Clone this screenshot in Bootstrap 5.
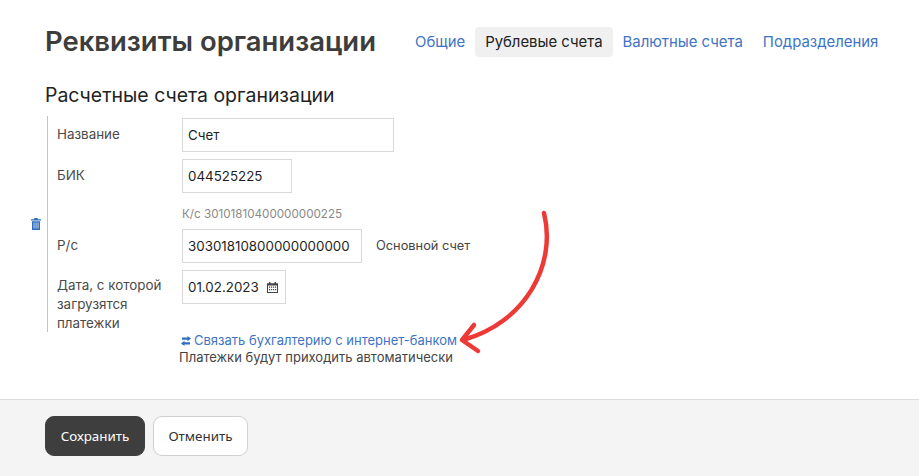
<!DOCTYPE html>
<html lang="ru"><head><meta charset="utf-8">
<title>Реквизиты организации</title>
<link href="https://cdn.jsdelivr.net/npm/bootstrap@5.3.0/dist/css/bootstrap.min.css" rel="stylesheet">
<style>
html,body{height:476px;overflow:hidden}
body{font-family:Inter,"Noto Sans",sans-serif;font-size:13px;color:#444;background:#fff;position:relative}
.page-main{height:399px;padding:21px 0 0 45px}
.page-head{height:40px}
.page-title{font-size:27.45px;font-weight:600;color:#3d3d3d;margin:0;line-height:40px;width:360px}
.tabs-row{margin-top:2px}
.tabs-row .nav-link{font-size:14.9px;line-height:20px;padding:5px 10px;color:#3f74c4;border-radius:4px}
.tabs-row .nav-link.active{background:#f0f0f0;color:#222}
.sect-title{font-size:19.45px;font-weight:400;color:#222;margin:22px 0 0;line-height:24px}
.acc-block{position:relative;width:500px;margin:9px 0 0 2px;border-left:1px solid #c4c4c4;height:216px;padding:2px 0 0 9px}
.f-row{display:flex;margin-bottom:7px}
.f-label{width:125px;flex:none;line-height:19px;padding-top:6.5px;color:#4a4a4a;font-size:13.4px}
.f-label-long{padding-top:5.5px}
.f-box{height:34px;border:1px solid #d9d9d9;padding:0 5px;font-size:13.35px;color:#1f1f1f;line-height:32px;white-space:nowrap;background:#fff}
.hint-row{font-size:11.65px;color:#8a8a8a;margin:14px 0 8px 125px;line-height:14px}
.trash{position:absolute;left:-17px;top:102px}
.main-acc{margin-left:14px;line-height:34px;font-size:12.8px}
.cal{margin-left:8px;vertical-align:-1px}
.bank-link{margin:-2px 0 0 136px;line-height:20px;color:#3f74c4;white-space:nowrap}
.bank-link svg{vertical-align:-1px;margin-right:2px}
.bank-note{margin-left:134px;line-height:15px;color:#444}
.curve{position:absolute;left:455px;top:205px}
.page-foot{height:77px;background:#f4f4f4;border-top:1px solid #dcdcdc;padding:16px 0 0 45px;font-family:"Noto Sans",sans-serif}
.btn-save,.btn-undo{height:40px;font-size:13.4px;line-height:20px;border-radius:9px;padding:9px 10px}
.btn-save{background:#3e3e3e;color:#fff;border:1px solid #3e3e3e;width:100px}
.btn-undo{background:#fff;color:#333;border:1px solid #d0d0d0;width:95px}
</style></head>
<body>
<div class="page-main">
  <div class="page-head d-flex align-items-center">
    <h1 class="page-title">Реквизиты организации</h1>
    <ul class="nav tabs-row">
      <li class="nav-item"><a class="nav-link" href="#">Общие</a></li>
      <li class="nav-item"><a class="nav-link active" href="#">Рублевые счета</a></li>
      <li class="nav-item"><a class="nav-link" href="#">Валютные счета</a></li>
      <li class="nav-item"><a class="nav-link" href="#">Подразделения</a></li>
    </ul>
  </div>
  <h2 class="sect-title">Расчетные счета организации</h2>
  <div class="acc-block">
    <svg class="trash" width="10" height="12" viewBox="0 0 10 12"><path fill="#2f6fc0" d="M3.5 0h3l.6 1.2H10v1.3H0V1.2h2.9zM1 3.2h8V12H1zm1.7 1.3v6h.7v-6zm2 0v6h.7v-6zm2 0v6h.7v-6z"/></svg>
    <div class="f-row"><div class="f-label">Название</div><div class="f-box" style="width:212px">Счет</div></div>
    <div class="f-row"><div class="f-label">БИК</div><div class="f-box" style="width:110px">044525225</div></div>
    <div class="hint-row">К/с 30101810400000000225</div>
    <div class="f-row"><div class="f-label">Р/с</div><div class="f-box" style="width:180px">30301810800000000000</div><span class="main-acc">Основной счет</span></div>
    <div class="f-row"><div class="f-label f-label-long">Дата, с которой загрузятся платежки</div><div class="f-box" style="width:104px">01.02.2023<svg class="cal" width="11" height="11" viewBox="0 0 11 11"><path fill="#444" d="M2 0h1.4v1.2h4.2V0H9v1.2h2V11H0V1.2h2zM1 3.6V10h9V3.6zM2 4.6h1.2v1.2H2zm2 0h1.2v1.2H4zm2 0h1.2v1.2H6zm2 0h1.2v1.2H8zM2 7h1.2v1.2H2zm2 0h1.2v1.2H4zm2 0h1.2v1.2H6zm2 0h1.2v1.2H8z"/></svg></div></div>
  </div>
  <div class="bank-link"><svg width="10" height="10" viewBox="0 0 10 10"><path fill="#2f6fc0" d="M6.5 0 10 2.6 6.5 5.2V3.8H1V1.5h5.5zM3.5 4.8V6.2H9v2.3H3.5V10L0 7.4z"/></svg><a href="#" class="text-decoration-none" style="margin-left:1px;color:inherit">Связать бухгалтерию с интернет-банком</a></div>
  <div class="bank-note">Платежки будут приходить автоматически</div>
</div>
<svg class="curve" width="100" height="150" viewBox="0 0 100 150" fill="none" stroke="#ee3a36" stroke-width="4.5" stroke-linecap="round" stroke-linejoin="round"><path d="M89 8C102 60 70 118 8 135"/><path d="M19 120 7 135 23 146"/></svg>
<div class="page-foot d-flex gap-2">
  <button class="btn btn-save" type="button">Сохранить</button>
  <button class="btn btn-undo" type="button">Отменить</button>
</div>
</body></html>
